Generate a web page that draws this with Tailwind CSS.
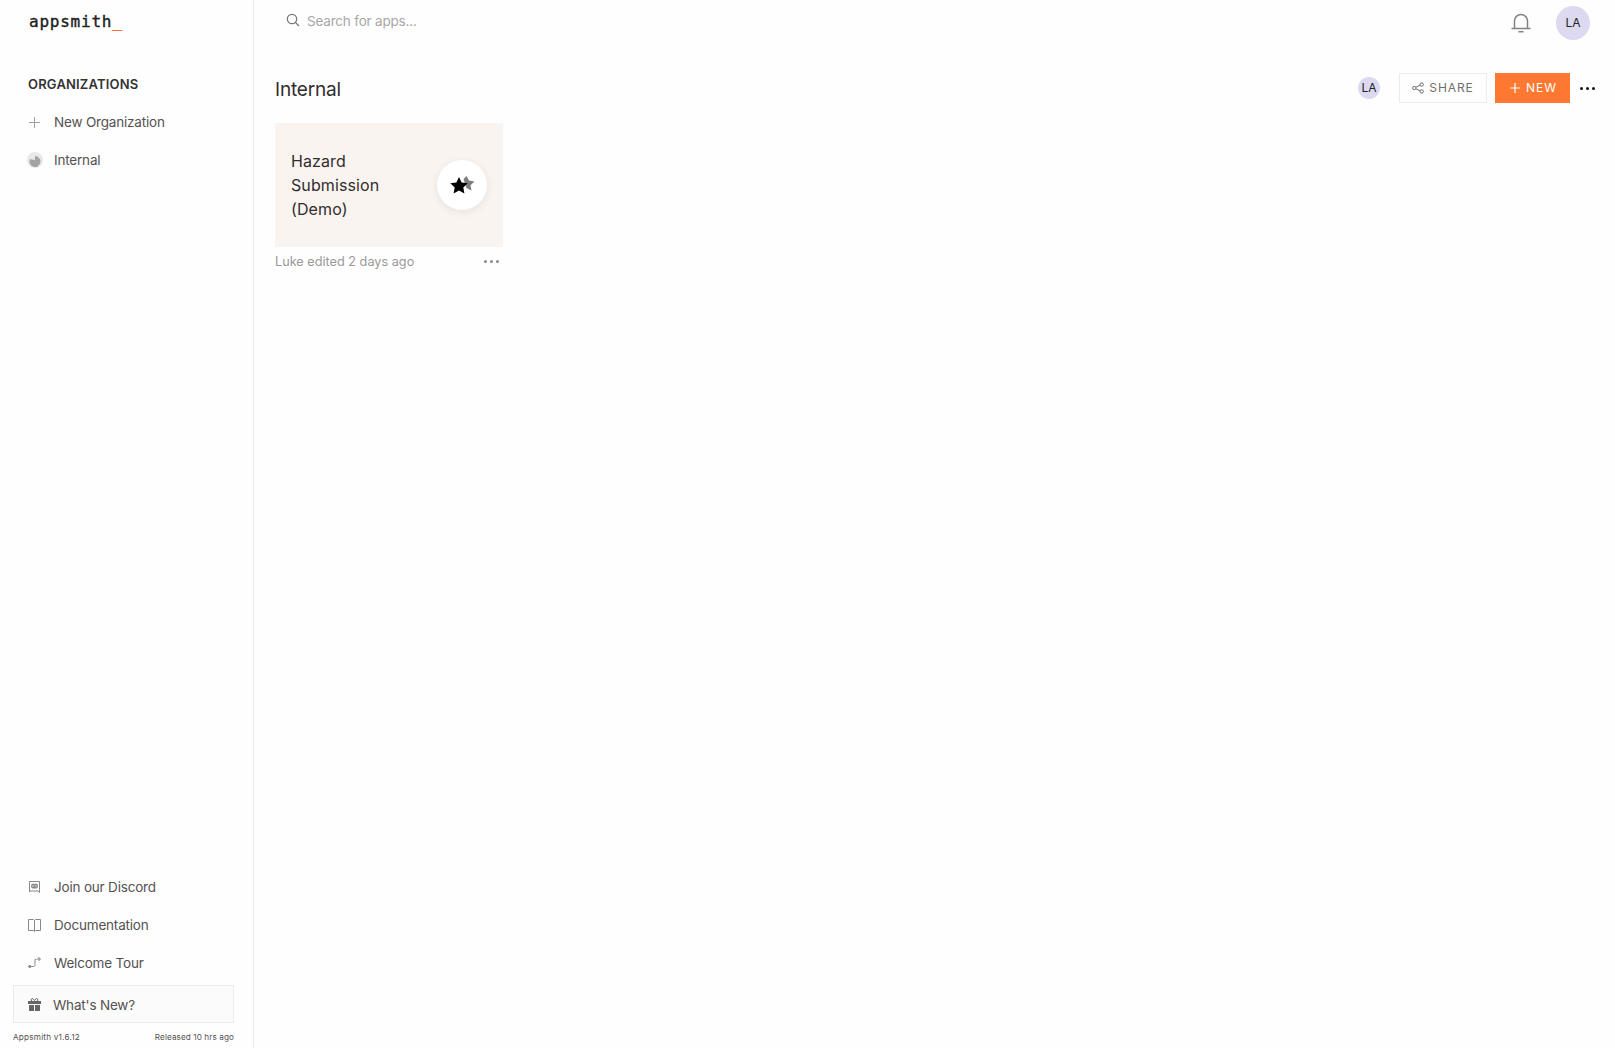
<!DOCTYPE html>
<html>
<head>
<meta charset="utf-8">
<script src="https://cdn.jsdelivr.net/npm/@tailwindcss/browser@4"></script>
</head>
<body class="bg-[#fefefe]">
<div class="flex h-[1048px] w-[1615px] overflow-hidden font-[Inter,sans-serif] text-[#555252]">
  <aside class="flex h-full w-[254px] shrink-0 flex-col border-r border-[#ebebeb]">
    <div class="pl-[29px] pt-[11px] font-['DejaVu_Sans_Mono',monospace] text-[16px] leading-[22px] tracking-[0.77px] text-[#222] [-webkit-text-stroke:0.4px_#222]">appsmith<span class="text-[#ff6d2d] [-webkit-text-stroke:0.5px_#ff6d2d]">_</span></div>
    <div class="mt-[41px] pl-[28px] text-[13px] leading-5 font-semibold tracking-[0.18px] text-[#333]">ORGANIZATIONS</div>
    <div class="mt-[9px] flex h-[38px] items-center pl-[28px] text-[13.5px] tracking-[-0.19px]">
      <svg class="w-[13px] h-[13px] mr-[13px]" viewBox="0 0 13 13" fill="none" stroke="#a0a0a0" stroke-width="1"><path d="M6.5 1v11M1 6.5h11"/></svg>
      New Organization
    </div>
    <div class="flex h-[38px] items-center pl-[27px] text-[13.5px] tracking-[-0.19px]">
      <svg class="w-4 h-4 mr-[11px]" viewBox="0 0 16 16"><circle cx="8" cy="8" r="8" fill="#e8e8e8"/><path d="M8 4a5.5 5.5 0 1 1-5 3.2L8 8z" fill="#a3a3a3"/></svg>
      Internal
    </div>
    <div class="mt-auto flex flex-col">
      <div class="flex h-[38px] items-center pl-[28px] text-[13.5px] tracking-[-0.19px]">
        <svg class="w-[13px] h-[13px] mr-[13px] -mt-[2px]" viewBox="0 0 13 13" fill="none"><path d="M1.5 12V1.500h10V12.500L10 11H2z" stroke="#888" stroke-width="1"/><rect x="3.200" y="3.800" width="6.600" height="4.600" rx="1.400" fill="#888"/><circle cx="5" cy="6" r=".7" fill="#fff"/><circle cx="8" cy="6" r=".7" fill="#fff"/></svg>
        Join our Discord
      </div>
      <div class="flex h-[38px] items-center pl-[28px] text-[13.5px] tracking-[-0.19px]">
        <svg class="w-[13px] h-[13px] mr-[13px]" viewBox="0 0 13 13" fill="none" stroke="#888" stroke-width="1"><path d="M.5.5h5l1 1 1-1h5v11h-5l-1 1-1-1h-5zM6.500 1.500v11"/></svg>
        Documentation
      </div>
      <div class="flex h-[38px] items-center pl-[28px] text-[13.5px] tracking-[-0.19px]">
        <svg class="w-[13px] h-[13px] mr-[13px] -mt-[2px]" viewBox="0 0 13 13" fill="none" stroke="#888" stroke-width="1"><circle cx="1.800" cy="10.500" r="1.100" fill="#888"/><path d="M3 10.500h2.500c1.200 0 1.500-.8 1.500-2V3.500h1.500M11 1v4M9 3h4"/></svg>
        Welcome Tour
      </div>
      <div class="ml-[13px] mr-[19px] mt-[3px] flex h-[38px] items-center border border-[#ebebeb] bg-[#fbfbfb] pl-[14px] pt-[2px] text-[13.5px] tracking-[-0.19px]">
        <svg class="w-[13px] h-[13px] mr-[12px] -mt-[2px]" viewBox="0 0 13 13" fill="#666"><path d="M0 3h13v3H0zM1 7h5v6H1zM7 7h5v6H7z"/><path d="M3.500 3C2.500 1 4 .2 5 .7L6.500 2.600 8 .7c1-.5 2.500.3 1.500 2.300" fill="none" stroke="#666"/></svg>
        What's New?
      </div>
      <div class="ml-[13px] mr-[19px] mb-[5px] mt-[9px] flex justify-between text-[8.2px] leading-[11px] tracking-[0.2px]">
        <span>Appsmith v1.6.12</span><span class="tracking-[0.08px]">Released 10 hrs ago</span>
      </div>
    </div>
  </aside>
  <main class="flex min-w-0 flex-1 flex-col">
    <div class="flex h-[45px] items-center pl-[32px] pr-[25px]">
      <svg class="w-[14px] h-[14px] mr-[7px] -mt-[5px]" viewBox="0 0 14 14" fill="none" stroke="#777" stroke-width="1.200"><circle cx="6" cy="6" r="4.700"/><path d="M9.500 9.500 13 13"/></svg>
      <span class="-mt-[3px] text-[13.5px] tracking-[-0.19px] text-[#a9a7a7]">Search for apps...</span>
      <svg class="ml-auto mr-[25px] w-5 h-5" viewBox="0 0 20 20" fill="none" stroke="#858282" stroke-width="1.500"><path d="M.5 15.500h19M3.500 15.500V8a6.500 6.500 0 0 1 13 0v7.500M7.500 18.800h5"/></svg>
      <div class="flex h-[34px] w-[34px] items-center justify-center rounded-full bg-[#dcd9f0] text-xs text-[#222]">LA</div>
    </div>
    <div class="mt-[28px] flex h-[30px] items-center pl-[21px] pr-[18px]">
      <h1 class="mt-[4px] text-[19px] leading-7 tracking-[-0.2px] text-[#302d2d]">Internal</h1>
      <div class="ml-auto mr-[19px] flex h-[22px] w-[22px] items-center justify-center rounded-full bg-[#dcd9f0] text-xs text-[#222]">LA</div>
      <div class="flex h-[30px] w-[88px] items-center justify-center gap-[5px] border border-[#ebebeb] text-xs tracking-[0.9px] text-[#716e6e]">
        <svg class="w-3 h-3" viewBox="0 0 12 12" fill="none" stroke="#716e6e" stroke-width="1"><circle cx="2.300" cy="6" r="1.700"/><circle cx="9.700" cy="2.500" r="1.700"/><circle cx="9.700" cy="9.500" r="1.700"/><path d="M3.800 5.200 8.200 3.200M3.800 6.800l4.400 2"/></svg>
        SHARE
      </div>
      <div class="ml-2 flex h-[30px] w-[75px] items-center justify-center gap-[6px] bg-[#fe7832] pl-[2px] text-xs tracking-[0.9px] text-white">
        <svg class="w-[10px] h-[10px]" viewBox="0 0 10 10" stroke="#fff" stroke-width="1.200"><path d="M5 0v10M0 5h10"/></svg>
        NEW
      </div>
      <div class="ml-[10px] flex w-[17px] items-center gap-[3px]">
        <span class="h-[3px] w-[3px] rounded-full bg-[#111]"></span><span class="h-[3px] w-[3px] rounded-full bg-[#111]"></span><span class="h-[3px] w-[3px] rounded-full bg-[#111]"></span>
      </div>
    </div>
    <div class="ml-[21px] mt-[20px] w-[228px]">
      <div class="flex h-[124px] items-center justify-between bg-[#faf4f0] pl-4 pr-[16px]">
        <div class="w-[100px] text-base leading-6 tracking-[0.1px] text-[#302d2d]">Hazard Submission (Demo)</div>
        <div class="flex h-[50px] w-[50px] items-center justify-center rounded-full bg-white shadow-[0_2px_8px_rgba(0,0,0,0.08)]">
          <svg class="w-[25px] h-[19px]" viewBox="0 0 25 19"><path d="M16.500 0l2.400 4.600 5.600.9-4 3.700 1 5.400-5-2.600-3-9z" fill="#7d7d7d"/><path d="M9 1l2.600 5.500 6.100.8-4.400 4.200 1.100 6L9 14.600l-5.400 2.900 1.100-6L.3 7.300l6.100-.8z" fill="#000"/></svg>
        </div>
      </div>
      <div class="mt-[6px] flex h-[17px] items-center justify-between pr-[4px] text-[12.7px] text-[#9b9999]">
        <span>Luke edited 2 days ago</span>
        <div class="flex items-center gap-[3px]">
          <span class="h-[3px] w-[3px] rounded-full bg-[#8a8888]"></span><span class="h-[3px] w-[3px] rounded-full bg-[#8a8888]"></span><span class="h-[3px] w-[3px] rounded-full bg-[#8a8888]"></span>
        </div>
      </div>
    </div>
  </main>
</div>
</body>
</html>
